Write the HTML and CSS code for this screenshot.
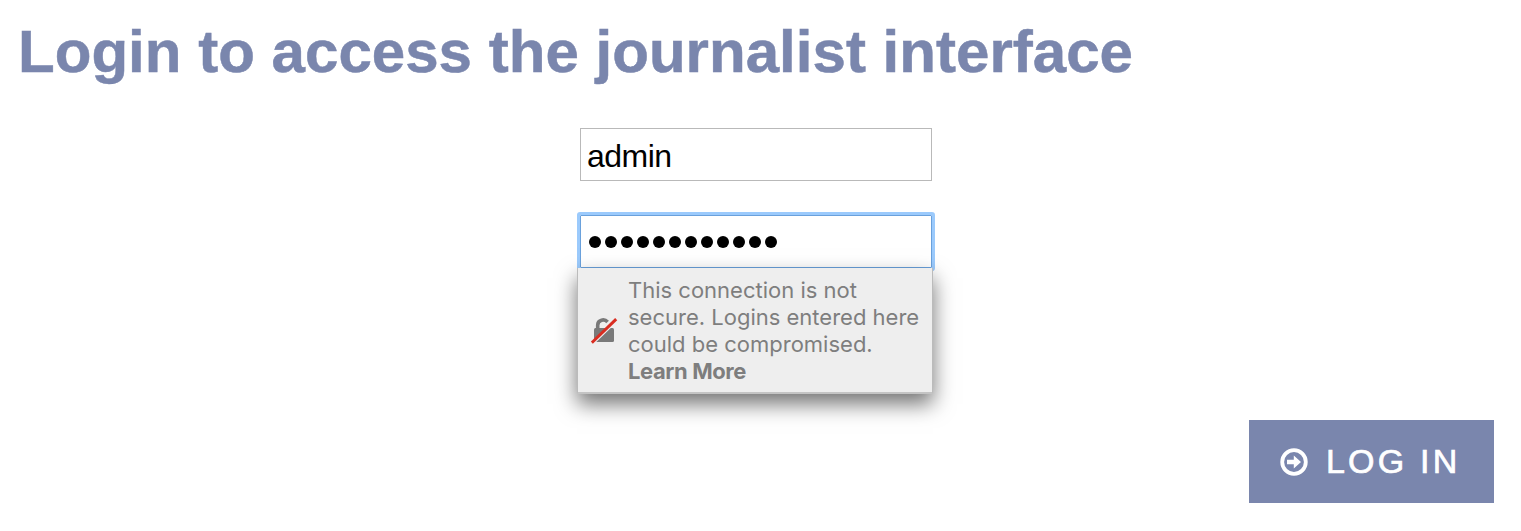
FILE: index.html
```html
<!DOCTYPE html>
<html lang="en">
<head>
<meta charset="utf-8">
<title>Journalist login</title>
<link rel="stylesheet" href="styles.css">
</head>
<body>
<main class="login">
  <h1 class="title"><svg class="title-line" width="1114" height="80"><text x="-2" y="52" textLength="1115" lengthAdjust="spacingAndGlyphs">Login to access the journalist interface</text></svg></h1>
  <form class="form">
    <div class="field username"><span class="value">admin</span></div>
    <div class="field password">
      <div class="dots"><i></i><i></i><i></i><i></i><i></i><i></i><i></i><i></i><i></i><i></i><i></i><i></i></div>
      <div class="warning">
        <svg class="lock" viewBox="0 0 28 28" width="28" height="28"><path d="M6.7 13V8.2C6.7 2.5 13.5 1.5 16.6 5" fill="none" stroke="#797979" stroke-width="3.6"/><path d="M4.5 11H16L3 23.5v-11Q3 11 4.500 11Z" fill="#797979"/><path d="M5.300 25L19.800 11H21.500Q23 11 23 12.500V23.500Q23 25 21.500 25Z" fill="#797979"/><path d="M.8 25.700L25.200 2.100" stroke="#d92d21" stroke-width="3"/></svg>
        <div class="message"><span>This connection is not</span><span>secure. Logins entered here</span><span>could be compromised.</span><b>Learn More</b></div>
      </div>
    </div>
    <button class="submit" type="button">
      <svg class="arrow" viewBox="0 0 28 28" width="28" height="28"><circle cx="14" cy="14" r="11.8" fill="none" stroke="#fff" stroke-width="3.8"/><path d="M7 11.7h6.8V7.5L21 14l-7.2 6.5v-4.2H7z" fill="#fff"/></svg>
      <span>LOG IN</span>
    </button>
  </form>
</main>
</body>
</html>
```
FILE: styles.css
```css
* { box-sizing: border-box; }
body { margin: 0; background: #fff; font-family: "Liberation Sans", Arial, sans-serif; }
.login { height: 531px; padding: 20px 27px 28px 20px; }
.title { height: 80px; margin: 0; }
.title-line { display: block; overflow: visible; font-size: 60px; font-weight: 700; fill: #7a86ad; stroke: #7a86ad; stroke-width: .5px; }
.form { display: flex; flex-direction: column; }
.field { width: 352px; height: 53px; margin-left: 560px; border: 1px solid #b9b9b9; }
.username { margin-top: 28px; padding: 9px 6px; font-size: 32px; line-height: 37px; letter-spacing: -.5px; }
.password { position: relative; margin-top: 34px; border-color: #6aa1dc; box-shadow: 0 0 0 3px #9bcafc; border-radius: 1px; }
.dots { display: flex; gap: 4px; padding: 20px 7.5px; }
.dots i { width: 12px; height: 12px; border-radius: 50%; background: #000; }
.warning { position: absolute; left: -4px; top: 52px; width: 356px; height: 126px; display: flex; border: 1px solid #bbb; border-top: 0; border-bottom: 2px solid #c4c4c4; background: #eee; box-shadow: 0 10px 20px rgba(0,0,0,.55); }
.lock { flex: none; margin: 49px 9.5px 0 12.5px; }
.message { display: flex; flex-direction: column; padding-top: 9px; font: 22px/27px Inter, sans-serif; color: #7e7e7e; white-space: nowrap; }
.message b { letter-spacing: -.4px; }
.submit { display: flex; align-items: center; align-self: flex-end; gap: 18px; width: 245px; height: 83px; margin-top: 152px; padding: 0 31px; border: 0; background: #7a86ad; color: #fff; font: 34px "Liberation Sans", sans-serif; letter-spacing: 3.2px; -webkit-text-stroke: .7px #fff; white-space: nowrap; }
```
